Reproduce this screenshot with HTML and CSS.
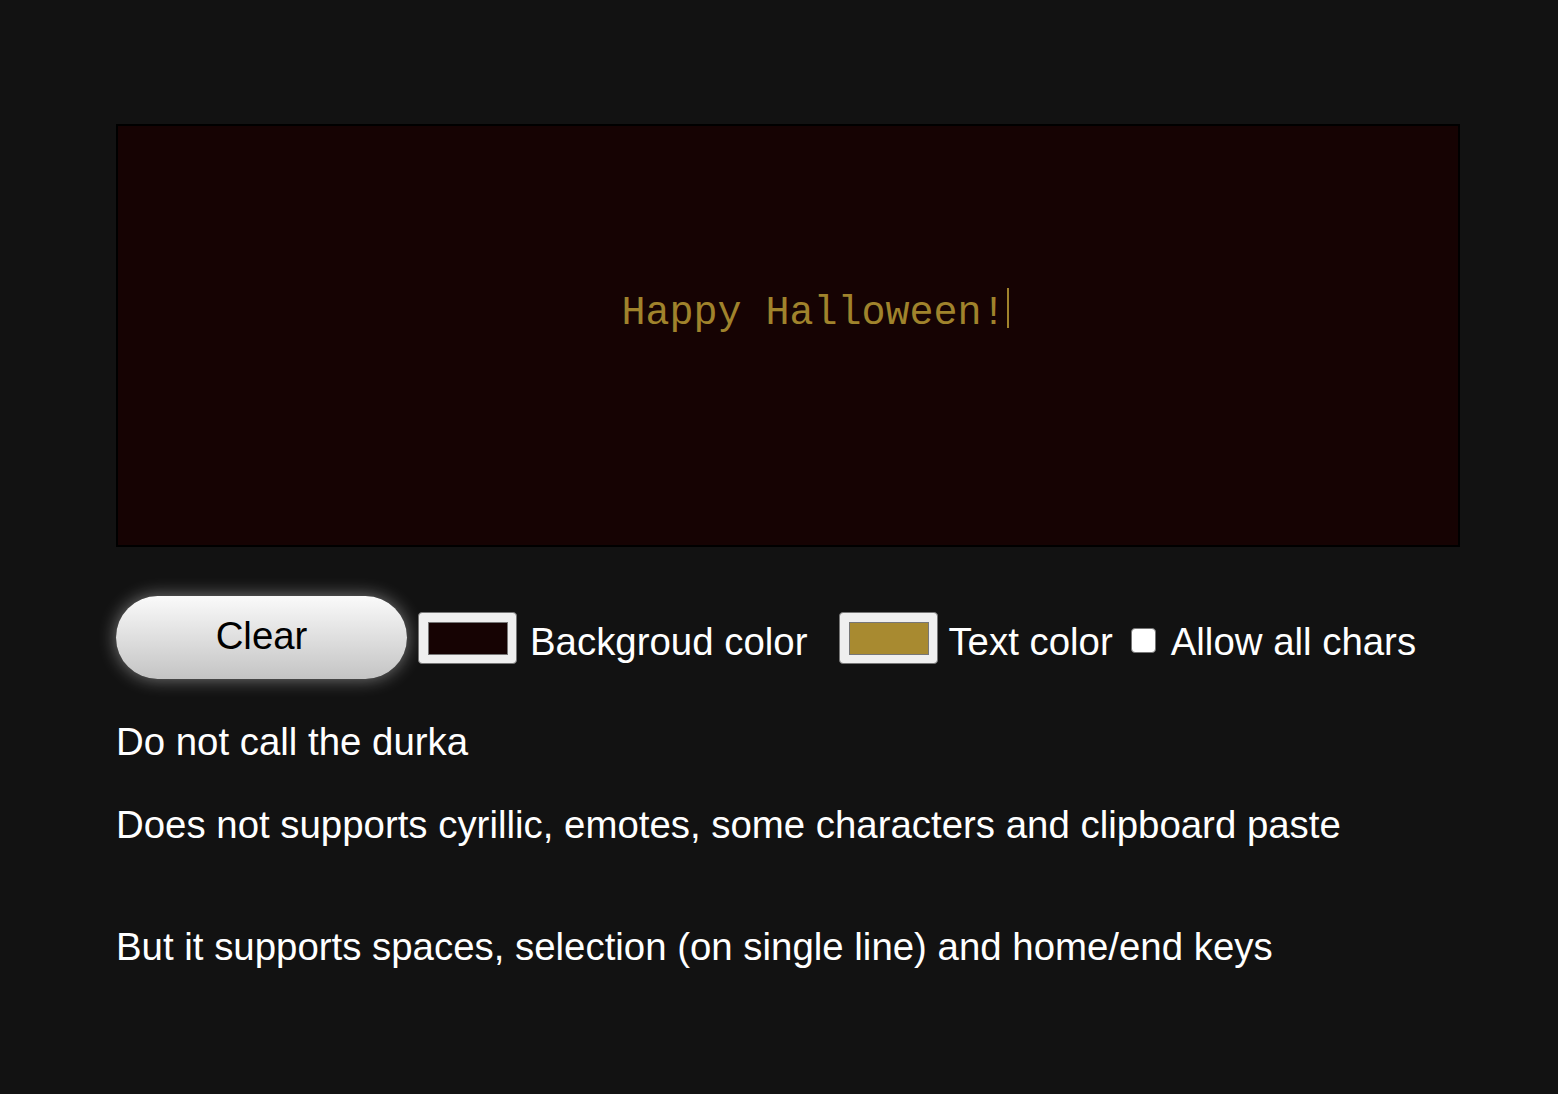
FILE: index.html
```html
<!DOCTYPE html>
<html lang="en">
<head>
    <meta charset="UTF-8">
    <meta name="viewport" content="width=device-width, initial-scale=1.0">
    <title>Halloween canvas</title>
    <link rel="stylesheet" href="styles.css">
</head>
<body>

<div id="wrap">

    <!-- Tekstfeltet (tegneflade) -->
    <div class="board" id="board">
        <span class="board-text">Happy Halloween!</span><span class="caret"></span>
    </div>

    <!-- Knapper og indstillinger -->
    <div class="controls">
        <button class="clear-btn" type="button">Clear</button>
        <span class="swatch"><span class="swatch-fill bg-fill"></span></span>
        <span class="label">Backgroud color</span>
        <span class="swatch swatch-text"><span class="swatch-fill text-fill"></span></span>
        <span class="label label-text">Text color</span>
        <span class="check"></span>
        <span class="label">Allow all chars</span>
    </div>

    <p>Do not call the durka</p>
    <p>Does not supports cyrillic, emotes, some characters and clipboard paste</p>
    <p class="later">But it supports spaces, selection (on single line) and home/end keys</p>

</div>

</body>
</html>
```

FILE: styles.css
```css
/* Generel styling */
body {
    margin: 0;
    background-color: #121212;
    color: #fff;
    font-family: "Liberation Sans", Arial, sans-serif;
    font-size: 38.4px;
}

#wrap {
    padding: 124px 0 0 116px;
}

/* Tegnefladen */
.board {
    width: 1286px;
    height: 375px;
    border: 2px solid #000;
    background-color: #160303;
    display: flex;
    justify-content: center;
    align-items: center;
    padding: 0 0 44px 54px;
}

.board-text {
    font-family: "Liberation Mono", "Courier New", monospace;
    font-size: 40px;
    line-height: 40px;
    color: #a0832c;
    white-space: pre;
}

.caret {
    display: inline-block;
    width: 2px;
    height: 40px;
    margin-left: 1px;
    margin-bottom: 12px;
    background-color: #a0832c;
}

/* Knapper og felter */
.controls {
    display: flex;
    align-items: center;
    margin-top: 49px;
    height: 83px;
}

.clear-btn {
    width: 291px;
    height: 83px;
    border: none;
    border-radius: 42px;
    background: linear-gradient(#fafafa, #c4c4c4);
    box-shadow: 0 0 18px rgba(255, 255, 255, 0.45);
    font-family: "Liberation Sans", Arial, sans-serif;
    font-size: 38.4px;
    color: #000;
    padding: 0 0 4px;
    cursor: pointer;
}

.swatch {
    width: 99px;
    height: 52px;
    box-sizing: border-box;
    margin: 1px 0 0 11px;
    padding: 9px 8px 8px 9px;
    background-color: #efefef;
    border: 1px solid #767676;
    border-radius: 4px;
    display: flex;
}

.swatch-text {
    margin-left: 32px;
}

.swatch-fill {
    flex: 1;
    border: 1px solid #777;
}

.bg-fill {
    background-color: #160303;
}

.text-fill {
    background-color: #a88a30;
}

.label {
    line-height: 44px;
    margin: 9px 0 0 13px;
}

.label-text {
    margin-left: 10px;
}

.check {
    width: 23px;
    height: 23px;
    background-color: #fff;
    border: 1px solid #767676;
    border-radius: 4px;
    margin: 6px 0 0 18px;
}

.check + .label {
    margin-left: 15px;
}

/* Tekstafsnit */
p {
    line-height: 44px;
    margin: 41px 0 0;
}

p + p {
    margin-top: 39px;
}

p.later {
    margin-top: 78px;
}
```
